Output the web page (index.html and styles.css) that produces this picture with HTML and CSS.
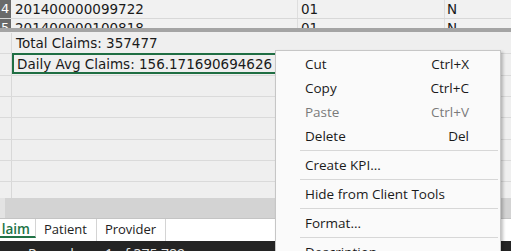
FILE: index.html
```html
<!DOCTYPE html>
<html>
<head>
<meta charset="utf-8">
<link rel="stylesheet" href="styles.css">
</head>
<body>
<div class="app">
  <div class="data">
    <div class="drow">
      <div class="rn">4</div>
      <div class="c c1">201400000099722</div>
      <div class="c c2">01</div>
      <div class="c c3">N</div>
    </div>
    <div class="drow">
      <div class="rn">5</div>
      <div class="c c1">201400000100818</div>
      <div class="c c2">01</div>
      <div class="c c3">N</div>
    </div>
  </div>
  <div class="splitter"></div>
  <div class="measures">
    <div class="mrow"><div class="mh"></div><div class="mc">Total Claims: 357477</div></div>
    <div class="mrow"><div class="mh"></div><div class="mc"><span class="sel">Daily Avg Claims: 156.171690694626</span></div></div>
    <div class="mrow"><div class="mh"></div><div class="mc"></div></div>
    <div class="mrow"><div class="mh"></div><div class="mc"></div></div>
    <div class="mrow"><div class="mh"></div><div class="mc"></div></div>
    <div class="mrow"><div class="mh"></div><div class="mc"></div></div>
    <div class="mrow"><div class="mh"></div><div class="mc"></div></div>
    <div class="mrow"><div class="mh"></div><div class="mc"></div></div>
  </div>
  <div class="hscroll"><div class="hs-left"></div></div>
  <div class="tabs">
    <div class="tab active">laim</div>
    <div class="tab">Patient</div>
    <div class="tab">Provider</div>
    <div class="tab-fill"></div>
  </div>
  <div class="status"><span class="st-label">Records:</span><span>1 of 375,789</span></div>

  <div class="menu">
    <div class="item"><span>Cut</span><span class="key">Ctrl+X</span></div>
    <div class="item"><span>Copy</span><span class="key">Ctrl+C</span></div>
    <div class="item disabled"><span>Paste</span><span class="key">Ctrl+V</span></div>
    <div class="item"><span>Delete</span><span class="key">Del</span></div>
    <div class="sep"></div>
    <div class="item"><span>Create KPI...</span></div>
    <div class="sep"></div>
    <div class="item"><span>Hide from Client Tools</span></div>
    <div class="sep"></div>
    <div class="item"><span>Format...</span></div>
    <div class="sep"></div>
    <div class="item"><span>Description...</span></div>
  </div>
</div>
</body>
</html>
```
FILE: styles.css
```css
html, body {
  margin: 0;
  padding: 0;
  overflow: hidden;
}
body {
  font-family: "Open Sans", "Noto Sans", sans-serif;
  color: #1a1a1a;
  background: #efefef;
}
.app {
  position: relative;
  width: 511px;
  height: 251px;
  overflow: hidden;
  display: flex;
  flex-direction: column;
}
.data {
  height: 28px;
  overflow: hidden;
  background: #f1f1f1;
  flex: none;
  font-family: "DejaVu Sans", sans-serif;
}
.drow {
  display: grid;
  grid-template-columns: 11px 287px 147px 1fr;
  height: 19px;
  border-bottom: 1px solid #d8d8d8;
  box-sizing: border-box;
}
.rn {
  background: #6a6a6a;
  color: #fff;
  font-size: 13px;
  line-height: 18px;
  padding-left: 1px;
  overflow: hidden;
}
.c {
  font-size: 13.5px;
  line-height: 18px;
  padding-left: 4px;
  border-right: 1px solid #dedede;
  white-space: nowrap;
}
.c2 { padding-left: 3px; }
.c3 { padding-left: 2px; border-right: none; }
.splitter {
  height: 4px;
  background: #a4a4a4;
  flex: none;
}
.measures {
  height: 166px;
  flex: none;
  padding-top: 1px;
  box-sizing: border-box;
  overflow: hidden;
  background: #efefef;
  font-family: "DejaVu Sans", sans-serif;
}
.mrow {
  display: flex;
  height: 21.33px;
  border-bottom: 1px solid #dadada;
  box-sizing: border-box;
}
.mh {
  width: 11px;
  border-right: 1px solid #d8d8d8;
  flex: none;
}
.mc {
  flex: 1;
  font-size: 13.5px;
  line-height: 20px;
  white-space: nowrap;
  padding-left: 4px;
}
.sel {
  display: block;
  width: 280px;
  margin-left: -4px;
  padding-left: 3px;
  border: 2px solid #1f6e43;
  height: 21px;
  line-height: 18px;
  box-sizing: border-box;
  margin-top: -1px;
}
.hscroll {
  height: 20px;
  background: #d3d3d3;
  flex: none;
  display: flex;
}
.hs-left {
  width: 5px;
  background: #e3e3e3;
}
.tabs {
  height: 23px;
  flex: none;
  display: flex;
  background: #fff;
  border-top: 1px solid #c4c4c4;
  box-sizing: border-box;
}
.tab {
  font-size: 13px;
  line-height: 21px;
  padding: 0 9px 0 8px;
  border-right: 1px solid #d4d4d4;
  color: #222;
}
.tab.active {
  width: 36px;
  box-sizing: border-box;
  text-align: right;
  color: #217346;
  font-weight: 600;
  font-size: 13.5px;
  padding: 0 5px 0 0;
  border-bottom: 2px solid #217346;
  height: 19px;
  line-height: 20px;
  overflow: hidden;
}
.tab-fill { flex: 1; }
.status {
  flex: none;
  height: 20px;
  background: #242424;
  color: #e6e6e6;
  font-size: 14px;
  line-height: 18px;
  padding: 4px 0 0 28px;
  white-space: nowrap;
  display: flex;
}
.st-label { width: 77px; }
.menu {
  position: absolute;
  left: 275px;
  top: 50px;
  width: 226px;
  height: 230px;
  background: #fafafa;
  border: 1px solid #c6c6c6;
  box-sizing: border-box;
  box-shadow: 2px 2px 3px rgba(0,0,0,0.25);
  padding-top: 1px;
  font-size: 13.5px;
}
.item {
  height: 24px;
  line-height: 24px;
  display: flex;
  justify-content: space-between;
  padding: 0 31px 0 29px;
  color: #1a1a1a;
}
.item.disabled { color: #7a7a7a; }
.sep {
  height: 1px;
  background: #d7d7d7;
  margin: 2px 2px 2px 24px;
}
```
